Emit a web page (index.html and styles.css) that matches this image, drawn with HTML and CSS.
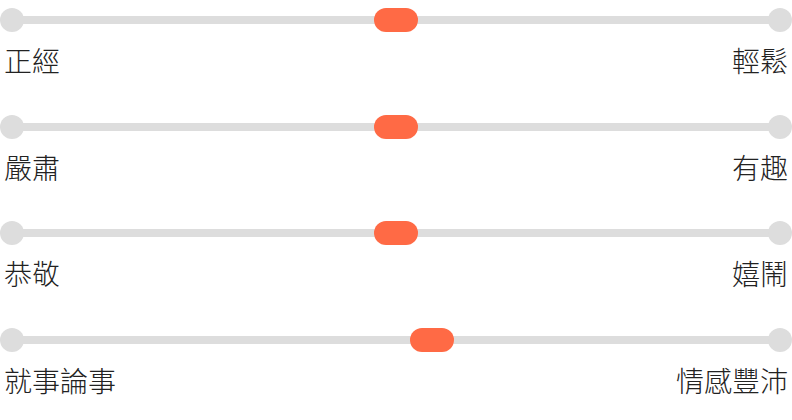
FILE: index.html
```html
<!DOCTYPE html>
<html lang="zh-Hant">
<head>
    <meta charset="UTF-8">
    <meta name="viewport" content="width=device-width, initial-scale=1.0">
    <title>語氣設定</title>
    <link rel="stylesheet" href="styles.css">
</head>
<body>
    <div class="scale-list">
        <div class="scale">
            <div class="track">
                <span class="end"></span>
                <span class="line"></span>
                <span class="end"></span>
                <span class="thumb" style="--value: 0.5"></span>
            </div>
            <div class="labels">
                <span>正經</span>
                <span>輕鬆</span>
            </div>
        </div>
        <div class="scale">
            <div class="track">
                <span class="end"></span>
                <span class="line"></span>
                <span class="end"></span>
                <span class="thumb" style="--value: 0.5"></span>
            </div>
            <div class="labels">
                <span>嚴肅</span>
                <span>有趣</span>
            </div>
        </div>
        <div class="scale">
            <div class="track">
                <span class="end"></span>
                <span class="line"></span>
                <span class="end"></span>
                <span class="thumb" style="--value: 0.5"></span>
            </div>
            <div class="labels">
                <span>恭敬</span>
                <span>嬉鬧</span>
            </div>
        </div>
        <div class="scale">
            <div class="track">
                <span class="end"></span>
                <span class="line"></span>
                <span class="end"></span>
                <span class="thumb" style="--value: 0.547"></span>
            </div>
            <div class="labels">
                <span>就事論事</span>
                <span>情感豐沛</span>
            </div>
        </div>
    </div>
</body>
</html>
```

FILE: styles.css
```css
body {
    margin: 0;
    font-family: "Noto Sans CJK TC", "Noto Sans", sans-serif;
    color: #222;
    background: #fff;
}
.scale-list {
    height: 412px;
    padding-top: 8px;
    display: flex;
    flex-direction: column;
    justify-content: space-between;
}
.scale {
    height: 92px;
}
.track {
    position: relative;
    display: flex;
    align-items: center;
    height: 24px;
}
.end {
    width: 24px;
    height: 24px;
    border-radius: 50%;
    background-color: #dddddd;
    flex-shrink: 0;
}
.line {
    flex: 1;
    height: 8px;
    margin: 0 -2px;
    background-color: #dddddd;
}
.thumb {
    position: absolute;
    top: 0;
    left: calc(12px + (100% - 24px) * var(--value));
    width: 44px;
    height: 24px;
    margin-left: -22px;
    border-radius: 12px;
    background-color: #ff6a45;
}
.labels {
    display: flex;
    justify-content: space-between;
    padding: 0 4px;
    margin-top: 8px;
    font-size: 28px;
    font-weight: 300;
    line-height: 40px;
}
```
